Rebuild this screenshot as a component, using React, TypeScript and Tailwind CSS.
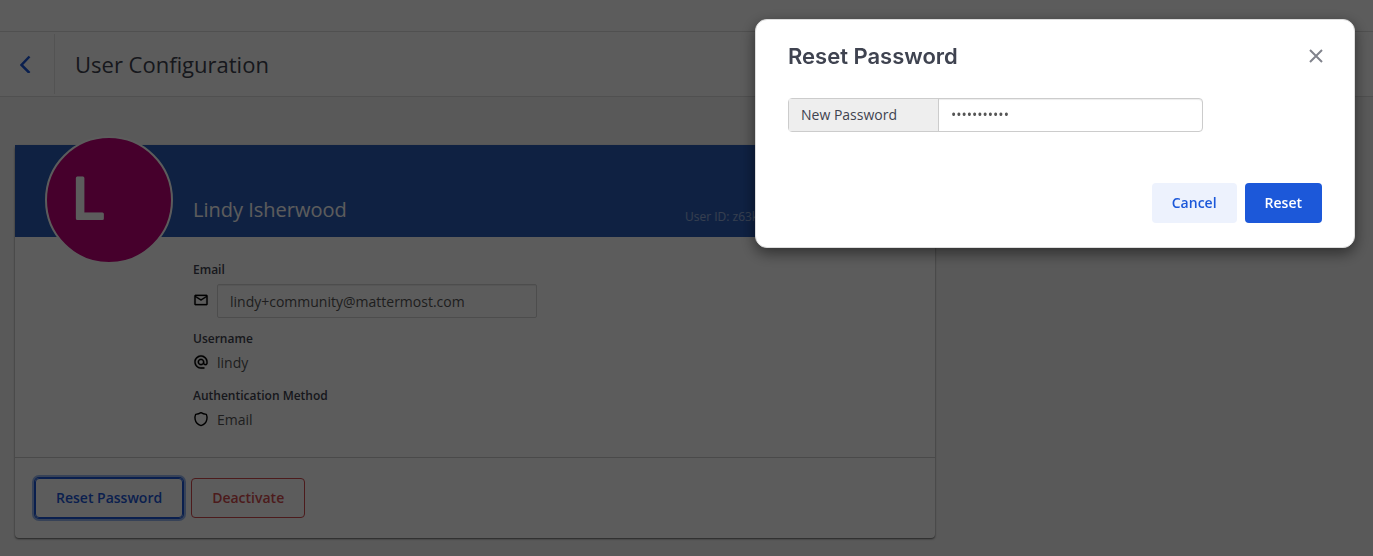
import React, { useState } from 'react';

function MailIcon() {
  return (
    <svg viewBox="0 0 24 24" className="mb-0.5 size-4 shrink-0" fill="#000" stroke="#000" strokeWidth="0.4" aria-hidden="true">
      <path d="M22 6c0-1.100-.9-2-2-2H4c-1.100 0-2 .9-2 2v12c0 1.100.9 2 2 2h16c1.100 0 2-.9 2-2V6zm-2 0l-8 5-8-5h16zm0 12H4V8l8 5 8-5v10z" />
    </svg>
  );
}

function AtIcon() {
  return (
    <svg viewBox="0 0 24 24" className="mb-0.5 size-4 shrink-0" fill="#000" stroke="#000" strokeWidth="0.4" aria-hidden="true">
      <path d="M12 1.950c-5.520 0-10 4.480-10 10s4.480 10 10 10h5v-2h-5c-4.340 0-8-3.660-8-8s3.660-8 8-8 8 3.660 8 8v1.430c0 .79-.71 1.570-1.500 1.570s-1.500-.78-1.500-1.570v-1.430c0-2.760-2.240-5-5-5s-5 2.240-5 5 2.240 5 5 5c1.380 0 2.640-.56 3.540-1.470.65.89 1.770 1.470 2.960 1.470 1.970 0 3.500-1.600 3.500-3.570v-1.430c0-5.520-4.480-10-10-10zm0 13c-1.660 0-3-1.340-3-3s1.340-3 3-3 3 1.340 3 3-1.340 3-3 3z" />
    </svg>
  );
}

function ShieldIcon() {
  return (
    <svg viewBox="0 0 24 24" className="mb-0.5 size-4 shrink-0" fill="none" stroke="#000" strokeWidth="2.100" strokeLinejoin="round" aria-hidden="true">
      <path d="M12 2.500c2.200 1.500 4.800 2.300 8 2.500 1 2.300 1.200 4.900.8 7.400-.8 4.600-4 7.900-8.800 9.600-4.800-1.700-8-5-8.800-9.600C2.800 9.900 3 7.300 4 5c3.200-.2 5.800-1 8-2.500z" />
    </svg>
  );
}

function Avatar() {
  return (
    <svg
      viewBox="0 0 128 128"
      className="absolute -top-[9px] left-[30px] size-32"
      role="img"
      aria-label="Lindy Isherwood"
    >
      <circle cx="64" cy="64" r="63" fill="#c2007a" stroke="#fff" strokeWidth="2" />
      <text
        x="27"
        y="82"
        fontFamily="'DejaVu Sans', sans-serif"
        fontSize="55"
        fill="#fff"
        stroke="#fff"
        strokeWidth="3"
        strokeLinejoin="round"
      >
        L
      </text>
    </svg>
  );
}

function Detail({ label, icon, children }: { label: string; icon: React.ReactNode; children: React.ReactNode }) {
  return (
    <div>
      <dt className="text-xs leading-4 font-semibold text-[#3f4350]">{label}</dt>
      <dd className="mt-2 flex h-4 items-center gap-2 text-sm leading-4 text-[#555]">
        {icon}
        {children}
      </dd>
    </div>
  );
}

function UserCard() {
  return (
    <section className="mx-[15px] mt-12 max-w-[920px] rounded-sm bg-white shadow-[0_1px_2px_rgba(0,0,0,0.6)]">
      <div className="relative flex h-[92px] items-end justify-between bg-[#2a5cb8] pr-5 pb-3 pl-[178px] text-white">
        <Avatar />
        <h2 className="text-xl leading-[30px]">Lindy Isherwood</h2>
        <span className="text-xs leading-4 opacity-50">User ID: z63kq8w1pfdm5mxn7yu4hs9rbc</span>
      </div>
      <dl className="flex h-[220px] flex-col gap-[17px] pt-[25px] pl-[178px]">
        <div>
          <dt className="text-xs leading-4 font-semibold text-[#3f4350]">
            <label htmlFor="email">Email</label>
          </dt>
          <dd className="mt-[6px] flex items-center gap-2">
            <MailIcon />
            <input
              id="email"
              type="email"
              defaultValue="lindy+community@mattermost.com"
              className="h-[34px] w-80 rounded-xs border border-[#d5d5d5] bg-white px-3 text-sm text-[#555] shadow-[inset_0_1px_1px_rgba(0,0,0,0.075)] outline-none"
            />
          </dd>
        </div>
        <div className="-mt-1 flex flex-col gap-[17px]">
          <Detail label="Username" icon={<AtIcon />}>
            lindy
          </Detail>
          <Detail label="Authentication Method" icon={<ShieldIcon />}>
            Email
          </Detail>
        </div>
      </dl>
      <div className="flex gap-2 border-t border-[#ccc] px-5 py-5">
        <button
          type="button"
          className="h-10 rounded-sm border border-[#1c58d9] px-5 text-sm font-semibold text-[#1c58d9] shadow-[0_0_0_1px_#1c58d9,0_0_0_3px_#99b8f0]"
        >
          Reset Password
        </button>
        <button
          type="button"
          className="h-10 rounded-sm border border-[#d24b4e] px-5 text-sm font-semibold text-[#d24b4e]"
        >
          Deactivate
        </button>
      </div>
    </section>
  );
}

function ResetDialog() {
  const [password, setPassword] = useState('hunter2hunt');
  return (
    <div className="fixed inset-0 flex items-start justify-end bg-black/64 pt-[19px] pr-[18px]">
      <form
        role="dialog"
        aria-modal="true"
        aria-labelledby="dialog-title"
        onSubmit={(e) => e.preventDefault()}
        className="w-full max-w-[600px] rounded-xl border border-[#ddd] bg-white px-8 pt-[22px] pb-6 shadow-[0_5px_15px_rgba(0,0,0,0.5)]"
      >
        <div className="flex items-center justify-between">
          <h1 id="dialog-title" className="font-['Inter',sans-serif] text-[22px] leading-7 font-semibold text-[#3f4350]">
            Reset Password
          </h1>
          <button type="button" aria-label="Close" className="-mr-[5px] p-1">
            <svg viewBox="0 0 14 14" className="size-[14px]" fill="none" stroke="#81838c" strokeWidth="2">
              <path d="M1 1l12 12M13 1L1 13" />
            </svg>
          </button>
        </div>
        <div className="mt-7 flex h-[34px] w-full max-w-[415px] rounded-sm border border-[#ccc] text-sm">
          <label htmlFor="password" className="flex w-[150px] items-center border-r border-[#ccc] bg-[#eee] px-3 text-[#3f4350]">
            New Password
          </label>
          <input
            id="password"
            type="password"
            value={password}
            onChange={(e) => setPassword(e.target.value)}
            className="min-w-0 flex-1 rounded-r-sm px-3 text-[#555] shadow-[inset_0_1px_1px_rgba(0,0,0,0.075)] outline-none"
          />
        </div>
        <div className="mt-[51px] flex justify-end gap-2 text-sm font-semibold">
          <button type="button" className="h-10 rounded-sm bg-[#edf2fd] px-5 text-[#1c58d9]">
            Cancel
          </button>
          <button type="submit" className="h-10 rounded-sm bg-[#1c58d9] px-5 text-white">
            Reset
          </button>
        </div>
      </form>
    </div>
  );
}

export default function App() {
  return (
    <div className="min-h-screen bg-[#f5f5f5] font-['Open_Sans',sans-serif]">
      <div className="h-8 border-b border-[#ddd] bg-white" />
      <header className="flex h-[65px] items-stretch border-b border-[#ddd] bg-white">
        <a href="#users" aria-label="Back" className="my-[2px] flex w-[55px] items-center border-r border-[#e5e5e5] pl-5">
          <svg viewBox="0 0 11 18" className="h-[18px] w-[11px]" fill="none" stroke="#1c58d9" strokeWidth="2.500">
            <path d="M9.500 1.500L1.500 10l8 8" />
          </svg>
        </a>
        <h1 className="self-center pl-5 text-[22px] leading-8 text-[#3f4350]">User Configuration</h1>
      </header>
      <UserCard />
      <ResetDialog />
    </div>
  );
}
